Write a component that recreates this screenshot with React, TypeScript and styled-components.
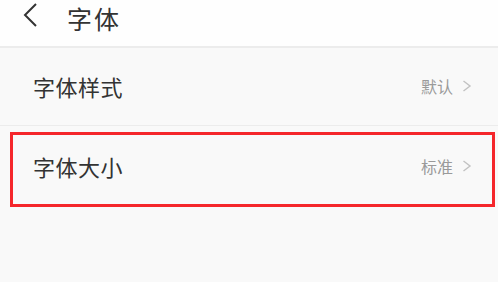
import React from "react";
import styled, { createGlobalStyle } from "styled-components";

const Global = createGlobalStyle`
  html, body { margin: 0; padding: 0; background: #f9f9f9; }
  body { font-family: "Noto Sans CJK SC", "Noto Sans", sans-serif; }
`;

const Page = styled.div`
  width: 498px;
  height: 282px;
  background: #f9f9f9;
  overflow: hidden;
  display: flex;
  flex-direction: column;
`;

const Header = styled.div`
  height: 46px;
  background: #fefefe;
  border-bottom: 2px solid #ececec;
  display: flex;
  align-items: flex-start;
  box-sizing: content-box;
`;

const BackButton = styled.div`
  width: 16px;
  height: 26px;
  margin: 2px 0 0 22px;
  display: flex;
`;

const Title = styled.div`
  margin: 0 0 0 29px;
  font-size: 25px;
  line-height: normal;
  color: #333;
  letter-spacing: 2px;
`;

const List = styled.div`
  display: flex;
  flex-direction: column;
`;

const Row = styled.div<{ $highlight?: boolean }>`
  display: flex;
  align-items: center;
  box-sizing: border-box;
  ${(p) =>
    p.$highlight
      ? `
    height: 75px;
    margin: 6px 3px 0 10px;
    border: 3px solid #f5262b;
    padding: 0 20px 7px 20px;
  `
      : `
    height: 78px;
    border-bottom: 1px solid #ececec;
    padding: 0 26px 2px 33px;
  `}
`;

const Label = styled.div`
  flex: 1;
  font-size: 22px;
  color: #333;
  letter-spacing: 0.5px;
`;

const Value = styled.div`
  font-size: 16px;
  color: #9a9a9a;
  margin-right: 9px;
`;

const Chevron = () => (
  <svg width="10" height="12" viewBox="0 0 10 12">
    <path d="M1.5 1 L8 6 L1.5 11" fill="none" stroke="#c2c2c2" strokeWidth="1.4" />
  </svg>
);

export default function App() {
  return (
    <Page>
      <Global />
      <Header>
        <BackButton>
          <svg width="16" height="26" viewBox="0 0 16 26">
            <path d="M14 2 L3 13 L14 24" fill="none" stroke="#333" strokeWidth="2" />
          </svg>
        </BackButton>
        <Title>字体</Title>
      </Header>
      <List>
        <Row>
          <Label>字体样式</Label>
          <Value>默认</Value>
          <Chevron />
        </Row>
        <Row $highlight>
          <Label>字体大小</Label>
          <Value>标准</Value>
          <Chevron />
        </Row>
      </List>
    </Page>
  );
}
